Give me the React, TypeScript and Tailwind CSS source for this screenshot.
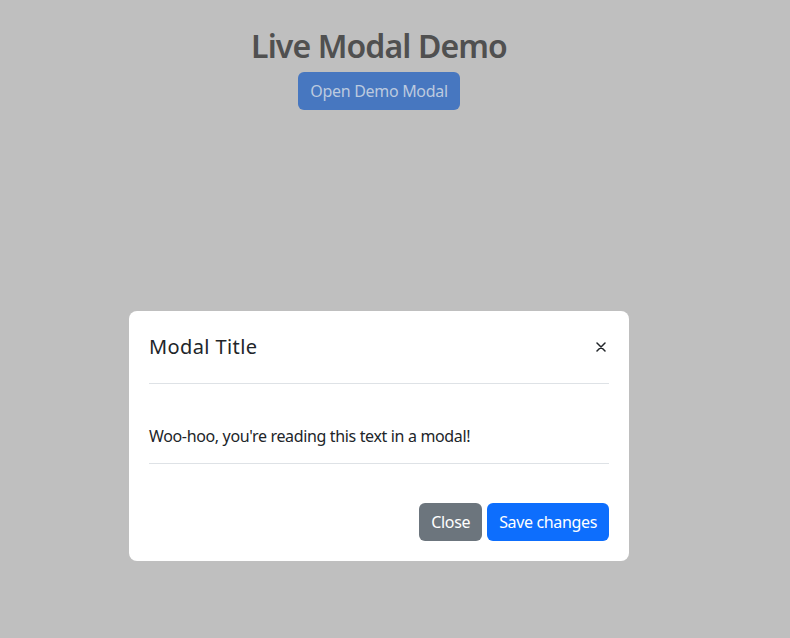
import React from 'react';

const font = { fontFamily: '"Noto Sans", "Open Sans", sans-serif' };

const CloseIcon: React.FC = () => (
  <svg width="10" height="10" viewBox="0 0 10 10" fill="none">
    <path d="M1 1L9 9M9 1L1 9" stroke="#212529" strokeWidth="1.5" strokeLinecap="round" />
  </svg>
);

const Modal: React.FC = () => {
  return (
    <div className="fixed inset-0 flex justify-center pt-[311px] pr-[32px]">
      <div className="w-[500px] h-[250px] bg-white rounded-[8px] flex flex-col text-[#212529]">
        {/* header */}
        <div className="mx-5 h-[73px] flex items-center justify-between border-b border-[#dee2e6]">
          <h5 className="text-[20px] leading-[30px] font-normal tracking-[0.4px]">Modal Title</h5>
          <button className="w-4 h-4 flex items-center justify-center">
            <CloseIcon />
          </button>
        </div>
        {/* body */}
        <div className="mx-5 pt-[40px] pb-[15px] border-b border-[#dee2e6]">
          <p className="text-[16px] leading-[24px] tracking-[-0.35px]">
            Woo-hoo, you're reading this text in a modal!
          </p>
        </div>
        {/* footer */}
        <div className="mx-5 pt-[39px] flex justify-end gap-[5px] tracking-[-0.35px]">
          <button className="h-[38px] px-3 rounded-[6px] bg-[#6c757d] text-white text-[16px] leading-[24px]">
            Close
          </button>
          <button className="h-[38px] px-3 rounded-[6px] bg-[#0d6efd] text-white text-[16px] leading-[24px]">
            Save changes
          </button>
        </div>
      </div>
    </div>
  );
};

const App: React.FC = () => {
  return (
    <div className="min-h-screen bg-[#bfbfbf] pr-[32px]" style={font}>
      <div className="flex flex-col items-center pt-[27px]">
        <h1 className="text-[32px] leading-[38px] font-semibold tracking-[-0.9px] text-[#505050]">
          Live Modal Demo
        </h1>
        <button className="mt-[7px] h-[38px] px-3 rounded-[6px] bg-[#4777c0] text-[#bccadf] text-[16px] leading-[24px] tracking-[-0.3px]">
          Open Demo Modal
        </button>
      </div>
      <Modal />
    </div>
  );
};

export default App;
